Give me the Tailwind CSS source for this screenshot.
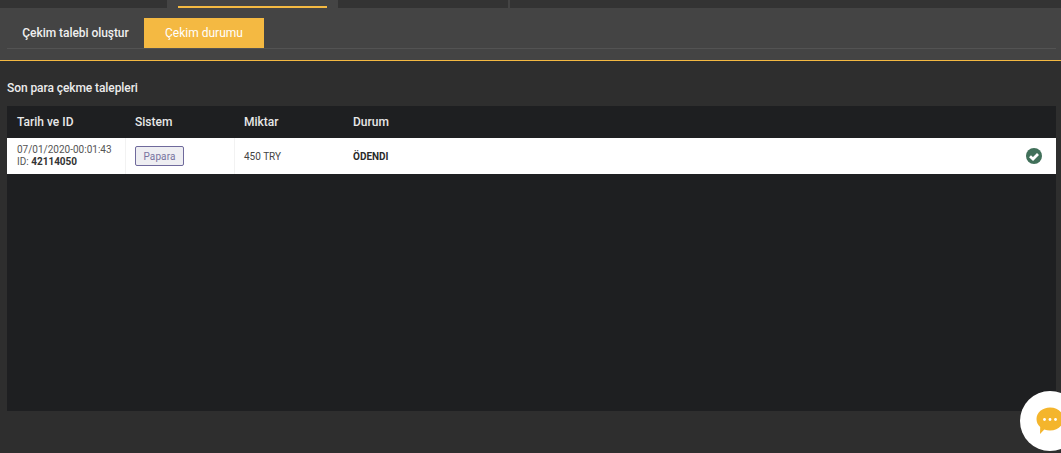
<!DOCTYPE html>
<html lang="en">
<head>
    <meta charset="UTF-8">
    <title>Çekim durumu</title>
    <script src="https://cdn.jsdelivr.net/npm/@tailwindcss/browser@4"></script>
</head>
<body class="relative h-[453px] overflow-hidden bg-[#2e2e2e] font-['Roboto',sans-serif]">
    <!-- top nav strip -->
    <div class="flex h-2 bg-[#333333]">
        <div class="ml-[167px] w-[171px] h-2 bg-[#444444] px-[11px]">
            <div class="mt-[6px] h-[2px] bg-[#f4b942]"></div>
        </div>
        <div class="ml-[170px] w-[2px] h-2 bg-[#444444]"></div>
    </div>

    <!-- tabs -->
    <div class="h-[53px] bg-[#444444] border-b border-[#f4b942] pt-[10px] pl-[7px] pr-[5px]">
        <div class="flex h-[31px] border-b border-[#535353] text-[12px]">
            <div class="w-[137px] h-[30px] flex items-center justify-center text-[#f0f0f0] font-medium tracking-[-0.05px]">Çekim talebi oluştur</div>
            <div class="w-[120px] h-[30px] flex items-center justify-center bg-[#f4b942] text-white">Çekim durumu</div>
        </div>
    </div>

    <div class="pr-[5px] pl-[7px]">
        <h2 class="h-[45px] pt-[20px] text-[12px] leading-[14px] font-medium tracking-[-0.08px] text-[#ececec]">Son para çekme talepleri</h2>

        <!-- table -->
        <div class="h-[305px] bg-[#1e1f21]">
            <div class="grid grid-cols-[118px_109px_109px_1fr] h-8 items-center text-[12px] font-medium text-[#e8e8e8]">
                <div class="pl-[10px]">Tarih ve ID</div>
                <div class="pl-[10px]">Sistem</div>
                <div class="pl-[10px]">Miktar</div>
                <div class="pl-[10px]">Durum</div>
            </div>
            <div class="grid grid-cols-[118px_109px_109px_1fr] h-9 bg-white text-[10px] text-[#444444]">
                <div class="pl-[10px] flex flex-col justify-center leading-[12px] text-[#555555]">
                    <span>07/01/2020-00:01:43</span>
                    <span>ID: <b class="font-bold text-[#333333]">42114050</b></span>
                </div>
                <div class="pl-[9px] flex items-center border-l border-[#f2f2f2]">
                    <span class="w-[49px] h-5 flex items-center justify-center rounded-[2px] border border-[#6f6a9c] bg-[#eeeef2] text-[#77739f] tracking-[0.1px]">Papara</span>
                </div>
                <div class="pl-[9px] flex items-center border-l border-[#f2f2f2]">450 TRY</div>
                <div class="pl-[10px] pr-[14px] flex items-center justify-between">
                    <span class="font-bold text-[#2a2a2a]">ÖDENDI</span>
                    <svg class="w-4 h-4" viewBox="0 0 16 16">
                        <circle cx="8" cy="8" r="8" fill="#41705a"/>
                        <path d="M4 8.2 L7 11 L12 5.900" fill="none" stroke="#fff" stroke-width="2.800"/>
                    </svg>
                </div>
            </div>
        </div>
    </div>

    <!-- chat button -->
    <div class="absolute left-[1020px] top-[391px] w-[60px] h-[60px] rounded-full bg-white">
        <svg class="absolute left-[16px] top-[16px] w-[28px] h-[28px]" viewBox="0 0 28 28">
            <path d="M14 0.500 C21.500 0.500 27.500 5.500 27.500 12 C27.500 18.500 21.500 23.500 14 23.500 C12 23.500 10 23.200 8.300 22.500 L4 27 L4.200 20 C1.800 18 0.500 15 0.500 12 C0.500 5.500 6.500 0.500 14 0.500 Z" fill="#f4b52c"/>
            <circle cx="8.500" cy="12.500" r="1.400" fill="#fff"/>
            <circle cx="14" cy="12.500" r="1.400" fill="#fff"/>
            <circle cx="19.500" cy="12.500" r="1.400" fill="#fff"/>
        </svg>
    </div>
</body>
</html>
